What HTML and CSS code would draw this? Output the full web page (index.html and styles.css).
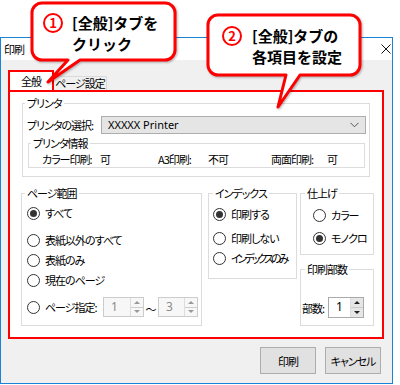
FILE: index.html
```html
<!DOCTYPE html>
<html lang="ja">
<head>
    <meta charset="UTF-8">
    <meta name="viewport" content="width=device-width, initial-scale=1.0">
    <title>印刷</title>
    <link rel="stylesheet" href="styles.css">
</head>
<body>

<div class="window">
    <div class="titlebar">
        <span class="title">印刷</span>
        <svg class="close" width="10" height="10" viewBox="0 0 10 10">
            <path d="M0.5 0.5 L9.5 9.5 M9.5 0.5 L0.5 9.5" stroke="#111" stroke-width="1" fill="none"/>
        </svg>
    </div>

    <div class="client">
        <div class="tabs">
            <div class="tab active">全般</div>
            <div class="tab">ページ設定</div>
        </div>

        <div class="panel">
            <div class="group printer">
                <div class="legend">プリンタ</div>
                <div class="select-row">
                    <span class="select-label">プリンタの選択:</span>
                    <div class="select">
                        <span>XXXXX Printer</span>
                        <svg width="9" height="6" viewBox="0 0 9 6">
                            <path d="M0.5 0.8 L4.5 4.8 L8.5 0.8" stroke="#555" stroke-width="1" fill="none"/>
                        </svg>
                    </div>
                </div>
                <div class="group info">
                    <div class="legend">プリンタ情報</div>
                    <div class="info-row">
                        <span>カラー印刷:</span><span>可</span>
                        <span>A3印刷:</span><span>不可</span>
                        <span>両面印刷:</span><span>可</span>
                    </div>
                </div>
            </div>

            <div class="options">
                <div class="group range">
                    <div class="legend">ページ範囲</div>
                    <div class="radio on first"><i></i>すべて</div>
                    <div class="radio second"><i></i>表紙以外のすべて</div>
                    <div class="radio"><i></i>表紙のみ</div>
                    <div class="radio"><i></i>現在のページ</div>
                    <div class="radio last">
                        <i></i><span class="page-label">ページ指定:</span>
                        <div class="spin off"><span class="val">1</span><span class="btns"><span class="up"></span><span class="down"></span></span></div>
                        <span class="tilde">〜</span>
                        <div class="spin off"><span class="val">3</span><span class="btns"><span class="up"></span><span class="down"></span></span></div>
                    </div>
                </div>

                <div class="group index">
                    <div class="legend">インデックス</div>
                    <div class="radio on first"><i></i>印刷する</div>
                    <div class="radio second"><i></i>印刷しない</div>
                    <div class="radio"><i></i><span class="narrow">インデックスのみ</span></div>
                </div>

                <div class="side">
                    <div class="group finish">
                        <div class="legend">仕上げ</div>
                        <div class="radio first"><i></i>カラー</div>
                        <div class="radio on second"><i></i>モノクロ</div>
                    </div>
                    <div class="group copies">
                        <div class="legend">印刷部数</div>
                        <div class="copies-row">
                            <span>部数:</span>
                            <div class="spin"><span class="val">1</span><span class="btns"><span class="up"></span><span class="down"></span></span></div>
                        </div>
                    </div>
                </div>
            </div>
        </div>

        <div class="buttons">
            <button type="button">印刷</button>
            <button type="button">キャンセル</button>
        </div>
    </div>
</div>

<!-- annotation callouts -->
<div class="callout c1">
    <svg class="shape" width="143" height="79" viewBox="0 0 143 79">
        <path d="M10 0 H133 A10 10 0 0 1 143 10 V47 A10 10 0 0 1 133 57 H48 L16 79 L36 57 H10 A10 10 0 0 1 0 47 V10 A10 10 0 0 1 10 0 Z"/>
    </svg>
    <span class="num">1</span>
    <div class="text">[全般]タブを<br>クリック</div>
</div>

<div class="callout c2">
    <svg class="shape" width="152" height="92" viewBox="0 0 152 92">
        <path d="M10 0 H142 A10 10 0 0 1 152 10 V50 A10 10 0 0 1 142 60 H92 L70 92 L78 60 H10 A10 10 0 0 1 0 50 V10 A10 10 0 0 1 10 0 Z"/>
    </svg>
    <span class="num">2</span>
    <div class="text">[全般]タブの<br>各項目を設定</div>
</div>

</body>
</html>
```

FILE: styles.css
```css
* {
    box-sizing: border-box;
}

body {
    margin: 0;
    width: 400px;
    height: 385px;
    position: relative;
    overflow: hidden;
    background-color: #fff;
    font-family: "Noto Sans CJK JP", sans-serif;
    font-size: 11px;
    letter-spacing: -1px;
    white-space: nowrap;
    color: #000;
    font-feature-settings: "palt";
}

/* dialog frame */
.window {
    margin-top: 37px;
    width: 393px;
    height: 347px;
    border: 1px solid #1883d7;
    display: flex;
    flex-direction: column;
}

.titlebar {
    height: 22px;
    background-color: #fff;
    display: flex;
    align-items: center;
    justify-content: space-between;
    padding: 0 1px 0 3px;
    line-height: 14px;
}

.client {
    flex: 1;
    background-color: #f0f0f0;
}

/* tabs */
.tabs {
    height: 30px;
    padding: 10px 0 0 7px;
    display: flex;
    align-items: flex-end;
}

.tab {
    height: 14px;
    width: 53px;
    border: 1px solid #d9d9d9;
    border-bottom: none;
    border-left: none;
    background-color: #f0f0f0;
    text-align: center;
    line-height: 13px;
}

.tab.active {
    height: 20px;
    width: 46px;
    border: 2px solid red;
    border-bottom: none;
    background-color: #fff;
    line-height: 18px;
}

.panel {
    margin: 0 8px 0 7px;
    height: 249px;
    border: 2px solid red;
    background-color: #fff;
    padding: 11px 11px 11px 11px;
}

/* group boxes */
.group {
    border: 1px solid #dcdcdc;
}

.legend {
    width: fit-content;
    margin-top: -7px;
    padding: 0 2px;
    background-color: #fff;
    line-height: 13px;
}

.printer {
    margin: 0 1px;
    padding: 0 3px 8px 4px;
}

.printer > .legend {
    margin-left: -2px;
}

.select-row {
    margin-top: 6px;
    display: flex;
    height: 18px;
    line-height: 18px;
}

.select-label {
    width: 74px;
}

.select {
    flex: 1;
    background-color: #e5e5e5;
    border: 1px solid #adadad;
    display: flex;
    align-items: center;
    justify-content: space-between;
    padding: 0 6px 0 6px;
    font-family: "Noto Sans", sans-serif;
    font-size: 11px;
    letter-spacing: 0;
}

.info {
    margin: 9px 1px 0 1px;
}

.info > .legend {
    margin-left: 2px;
}

.info-row {
    margin-top: 1px;
    padding-left: 13px;
    line-height: 16px;
    display: grid;
    grid-template-columns: 58px 58px 50px 63px 56px auto;
}

.options {
    margin-top: 16px;
    height: 133px;
    display: grid;
    grid-template-columns: 181px 89px 71px;
    column-gap: 6px;
}

.options .side {
    margin-left: -3px;
    display: flex;
    flex-direction: column;
}

/* radio buttons */
.radio {
    height: 20px;
    display: flex;
    align-items: center;
}

.radio i {
    width: 13px;
    height: 13px;
    margin-right: 5px;
    border: 1px solid #333;
    border-radius: 50%;
    background-color: #fff;
    display: flex;
    align-items: center;
    justify-content: center;
    flex-shrink: 0;
}

.radio.on i::after {
    content: "";
    width: 7px;
    height: 7px;
    border-radius: 50%;
    background-color: #333;
}

.narrow {
    letter-spacing: -3px;
}

.range {
    padding: 0 0 8px 5px;
}

.range > .legend {
    margin-left: -2px;
}

.range .first {
    margin-top: 3px;
}

.range .second {
    margin-top: 7px;
}

.range .last {
    margin-top: 7px;
}

.page-label {
    width: 58px;
}

.tilde {
    width: 14px;
    text-align: center;
    padding-top: 4px;
    letter-spacing: 0;
}

.index {
    align-self: start;
    padding: 0 0 10px 4px;
}

.index .first {
    margin-top: 4px;
}

.index .second {
    margin-top: 4px;
}

.finish {
    height: 62px;
    padding: 0 0 0 12px;
}

.finish > .legend {
    margin-left: -8px;
}

.finish .first {
    margin-top: 5px;
}

.finish .second {
    margin-top: 3px;
}

.copies {
    margin-top: 14px;
    flex: 1;
    padding-left: 1px;
}

.copies > .legend {
    margin-left: 3px;
}

.copies-row {
    margin-top: 21px;
    display: flex;
    align-items: center;
    gap: 4px;
}

.copies-row .spin {
    width: 36px;
    height: 21px;
    border-color: #aaa;
}

/* spin boxes */
.spin {
    width: 41px;
    height: 20px;
    border: 1px solid #ccc;
    background-color: #fff;
    display: flex;
}

.spin + .tilde + .spin {
    width: 40px;
}

.spin .val {
    flex: 1;
    padding-left: 7px;
    line-height: 18px;
    font-family: "Noto Sans", sans-serif;
    font-size: 12px;
    letter-spacing: 0;
}

.spin .btns {
    width: 13px;
    display: flex;
    flex-direction: column;
    border-left: 1px solid #ddd;
}

.spin .btns span {
    flex: 1;
    display: flex;
    align-items: center;
    justify-content: center;
    background-color: #e6e6e6;
}

.spin .btns span + span {
    border-top: 1px solid #ccc;
}

.spin .up::before {
    content: "";
    border: 3px solid transparent;
    border-top-width: 0;
    border-bottom-color: #222;
}

.spin .down::before {
    content: "";
    border: 3px solid transparent;
    border-bottom-width: 0;
    border-top-color: #222;
}

.spin.off {
    background-color: #f7f7f7;
    color: #8a8a8a;
}

.spin.off .btns span {
    background-color: #f7f7f7;
}

.spin.off .up::before {
    border-bottom-color: #999;
}

.spin.off .down::before {
    border-top-color: #999;
}

/* dialog buttons */
.buttons {
    display: flex;
    justify-content: flex-end;
    gap: 9px;
    padding: 8px 11px 0 0;
}

.buttons button {
    width: 56px;
    height: 27px;
    background-color: #e1e1e1;
    border: 1px solid #adadad;
    font-family: "Noto Sans CJK JP", sans-serif;
    font-size: 11px;
    letter-spacing: -1px;
    font-feature-settings: "palt";
    color: #000;
    padding: 0;
}

/* annotation callouts */
.callout {
    position: absolute;
    z-index: 5;
    display: flex;
    align-items: flex-start;
    font-size: 15px;
    font-weight: bold;
    line-height: 21px;
    letter-spacing: 0;
    font-feature-settings: normal;
}

.callout .shape {
    position: absolute;
    left: 0;
    top: 0;
    z-index: -1;
    overflow: visible;
    filter: drop-shadow(1px 1px 1px rgba(0, 0, 0, 0.3));
}

.callout .shape path {
    fill: #fff;
    stroke: #f00;
    stroke-width: 3;
    stroke-linejoin: round;
}

.num {
    width: 20px;
    height: 20px;
    margin-top: 1px;
    border: 2px solid #f00;
    border-radius: 50%;
    color: #f00;
    font-size: 13px;
    line-height: 16px;
    text-align: center;
    flex-shrink: 0;
}

.c1 {
    left: 32px;
    top: 3px;
    width: 143px;
    height: 57px;
    padding: 9px 0 0 11px;
}

.c1 .num {
    margin-right: 9px;
}

.c2 {
    left: 208px;
    top: 15px;
    width: 152px;
    height: 60px;
    padding: 10px 0 0 14px;
}

.c2 .num {
    margin-right: 10px;
}
```
